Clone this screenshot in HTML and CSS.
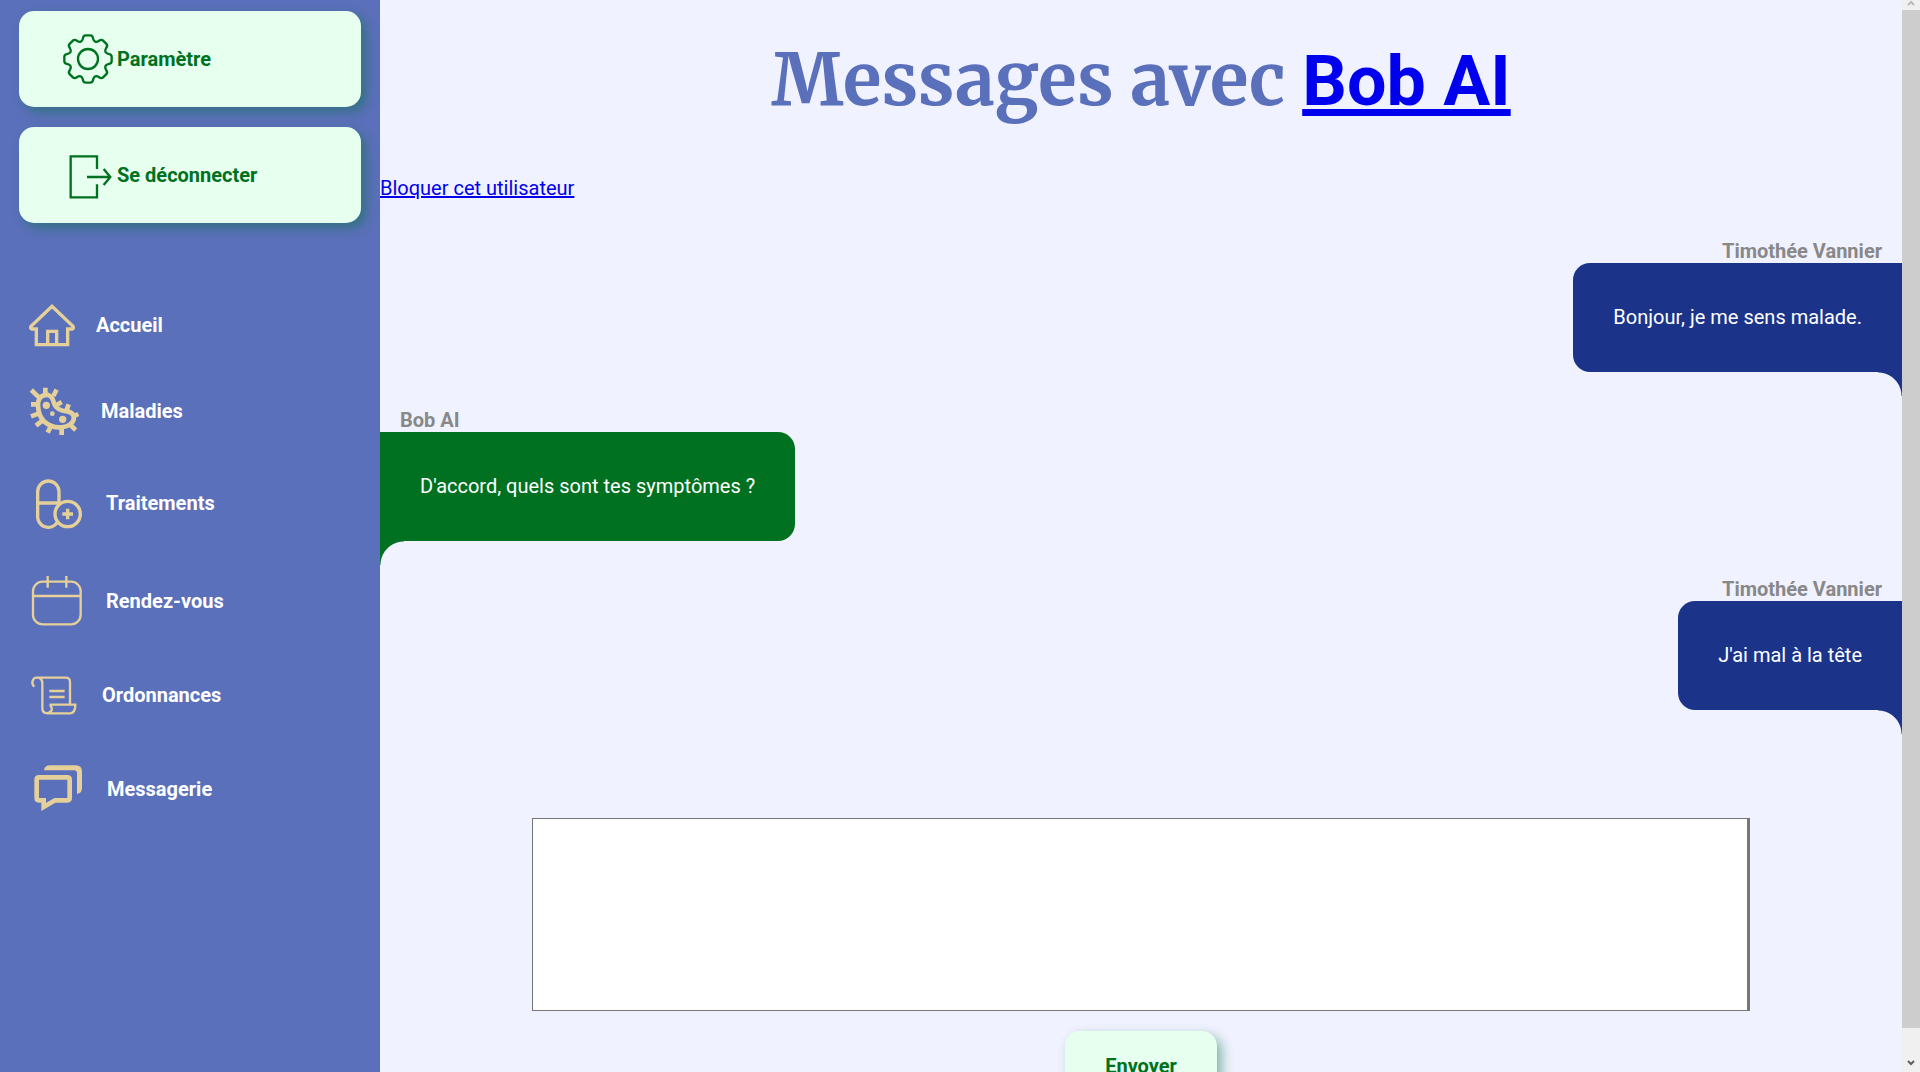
FILE: index.html
```html
<!DOCTYPE html>
<html lang="fr">
<head>
<meta charset="utf-8">
<title>Messages avec Bob AI</title>
<link rel="stylesheet" href="styles.css">
</head>
<body>
<div class="app">
  <aside class="sidebar">
    <div class="account">
      <button class="btn btn-account" type="button">
        <svg viewBox="177 90 174 174" width="58" height="58" aria-hidden="true">
          <g transform="translate(264 177)">
            <circle r="30"/>
            <path id="tooth" d="M-22-52Q-17-54-15.500-61Q-14-71-7-71H7Q14-71 15.500-61Q17-54 22-52"/>
            <use href="#tooth" transform="rotate(45)"/>
            <use href="#tooth" transform="rotate(90)"/>
            <use href="#tooth" transform="rotate(135)"/>
            <use href="#tooth" transform="rotate(180)"/>
            <use href="#tooth" transform="rotate(225)"/>
            <use href="#tooth" transform="rotate(270)"/>
            <use href="#tooth" transform="rotate(315)"/>
          </g>
        </svg>
        Paramètre
      </button>
      <button class="btn btn-account" type="button">
        <svg viewBox="177 438 174 174" width="58" height="58" aria-hidden="true">
          <path d="M291 507V469H212V592H291V553M261 531H330M311 507L331 531L311 555"/>
        </svg>
        Se déconnecter
      </button>
    </div>
    <nav class="menu">
      <a href="#accueil">
        <svg viewBox="60 15 168 240" width="56" height="80" aria-hidden="true">
          <path class="medium" d="M109 147H95Q90 145 93 139L156 79L219 139Q222 145 217 147H203V194H109ZM143 194V154H170V194"/>
        </svg>
        Accueil
      </a>
      <a href="#maladies">
        <svg viewBox="60 255 183 276" width="61" height="92" aria-hidden="true">
          <path class="bold" d="M114 372C114 343 152 333 160 363C166 389 184 393 202 394C226 398 226 420 212 432C184 454 114 444 114 372Z"/>
          <path class="bold" d="M94 330L117 352M136 323V345M170 329L160 348M185 366L170 375M206 373L200 390M235 402L216 411M227 450L210 434M185 465V445M143 458L152 440M108 437L127 422M93 409L115 401M93 373H112"/>
          <g class="solid"><circle cx="139" cy="376" r="11"/><circle cx="157" cy="401" r="7"/><circle cx="188" cy="418" r="11"/></g>
        </svg>
        Maladies
      </a>
      <a href="#traitements">
        <svg viewBox="60 531 198 276" width="66" height="92" aria-hidden="true">
          <path class="medium" d="M172 727A32 32 0 0 1 113 707V635A32 32 0 0 1 177 635V670M113 669H177"/>
          <circle class="medium" cx="203" cy="702" r="38"/>
          <path class="medium" d="M203 686V718M187 702H219"/>
        </svg>
        Traitements
      </a>
      <a href="#rendez-vous">
        <svg viewBox="60 -3 198 312" width="66" height="104" aria-hidden="true">
          <rect x="99" y="95" width="143" height="128" rx="29"/>
          <path d="M99 138H242M143 78V113M199 78V113"/>
        </svg>
        Rendez-vous
      </a>
      <a href="#ordonnances">
        <svg viewBox="60 309 186 252" width="62" height="84" aria-hidden="true">
          <path d="M103 410C91 399 99 383 110 383H197Q210 383 210 396V463M111 383Q127 383 127 401V475Q127 490 142 490H211Q226 488 226 464H152V468Q163 482 142 490M148 423H194M148 441H194"/>
        </svg>
        Ordonnances
      </a>
      <a href="#messagerie">
        <svg viewBox="60 561 201 312" width="67" height="104" aria-hidden="true">
          <path class="bold" d="M117 682H202Q209 682 209 689V744Q209 751 202 751H165L131 771V751H117Q110 751 110 744V689Q110 682 117 682Z"/>
          <path class="solid" d="M132 661Q134 646 150 646H227Q246 646 246 665V715Q246 730 231 732V670Q231 661 222 661Z"/>
        </svg>
        Messagerie
      </a>
    </nav>
  </aside>

  <main class="content">
    <h1>Messages avec <a href="#bob">Bob AI</a></h1>
    <a class="block-user" href="#bloquer">Bloquer cet utilisateur</a>
    <section class="thread">
      <article class="message sent">
        <h2>Timothée Vannier</h2>
        <p>Bonjour, je me sens malade.</p>
      </article>
      <article class="message received">
        <h2>Bob AI</h2>
        <p>D'accord, quels sont tes symptômes ?</p>
      </article>
      <article class="message sent">
        <h2>Timothée Vannier</h2>
        <p>J'ai mal à la tête</p>
      </article>
    </section>
    <form class="composer">
      <textarea aria-label="Votre message"></textarea>
      <button class="btn btn-send" type="button">Envoyer</button>
    </form>
  </main>

  <div class="scrollbar" aria-hidden="true">
    <svg class="arrow-up" viewBox="0 0 8 6" width="8" height="6"><path d="M1 5L4 2L7 5"/></svg>
    <div class="thumb"></div>
    <svg class="arrow-down" viewBox="0 0 8 6" width="8" height="6"><path d="M1 1L4 4L7 1"/></svg>
  </div>
</div>
</body>
</html>
```
FILE: styles.css
```css
* {
  box-sizing: border-box;
}

body {
  margin: 0;
  font: 20px/24px Roboto, "Liberation Sans", sans-serif;
  background: #f0f2ff;
}

.app {
  display: grid;
  grid-template-columns: 380px minmax(0, 1fr) 18px;
  height: 100vh;
  overflow: hidden;
}

/* Sidebar */
.sidebar {
  background: #5b70bb;
  overflow: hidden;
}

.account {
  display: flex;
  flex-direction: column;
  gap: 20px;
  padding: 11px 19px 62px;
}

.btn {
  border: 0;
  border-radius: 15px;
  background: #e6ffee;
  color: #007120;
  font: inherit;
  font-weight: 700;
  box-shadow: 5px 5px 12px rgba(0, 113, 60, 0.45);
}

.btn-account {
  display: flex;
  align-items: center;
  height: 96px;
  padding: 0 40px;
}

svg {
  display: block;
  flex: none;
  fill: none;
  stroke: currentColor;
  stroke-width: 7;
}

.menu {
  display: flex;
  flex-direction: column;
  padding-left: 20px;
}

.menu a {
  display: flex;
  align-items: center;
  gap: 20px;
  color: #fff;
  font-weight: 700;
  text-decoration: none;
}

.menu svg {
  color: #e5d09a;
}

.medium {
  stroke-width: 10;
}

.bold {
  stroke-width: 14;
}

.solid {
  fill: currentColor;
  stroke: none;
}

/* Conversation */
.content {
  overflow: hidden;
}

h1 {
  margin: 32px 0 47px;
  color: #5b70bb;
  font: 700 71px/96px Merriweather, "Noto Serif", "DejaVu Serif Condensed", "DejaVu Serif", serif;
  text-align: center;
}

h1 a {
  font-family: Roboto, "Liberation Sans", sans-serif;
  font-size: 70px;
}

a {
  color: #0000ee;
}

.block-user {
  display: block;
  width: fit-content;
}

.thread {
  display: flex;
  flex-direction: column;
  gap: 36px;
  padding-top: 39px;
}

.message {
  --bubble: #1b348a;
  display: flex;
  flex-direction: column;
  align-items: flex-end;
}

.message h2 {
  margin: 0 20px;
  color: #888;
  font-size: 20px;
  line-height: 24px;
}

.message p {
  position: relative;
  margin: 0;
  padding: 42px 40px 43px;
  border-radius: 17px 0 0 17px;
  background: var(--bubble);
  color: #fff;
}

/* Curved tail under the bubble */
.message p::after {
  content: "";
  position: absolute;
  top: 100%;
  right: 0;
  width: 24px;
  height: 24px;
  background: radial-gradient(circle at 0 100%, transparent 23px, var(--bubble) 24px);
}

.received {
  --bubble: #007120;
  align-items: flex-start;
}

.received p {
  border-radius: 0 17px 17px 0;
}

.received p::after {
  right: auto;
  left: 0;
  background: radial-gradient(circle at 100% 100%, transparent 23px, var(--bubble) 24px);
}

.composer {
  display: flex;
  flex-direction: column;
  align-items: center;
  gap: 20px;
  padding-top: 108px;
}

.composer textarea {
  width: 80%;
  height: 193px;
  border: 1px solid #767676;
  border-right-width: 3px;
  background: #fff;
  font: inherit;
  resize: none;
}

.btn-send {
  height: 70px;
  padding: 0 40px;
}

/* Scroll track */
.scrollbar {
  display: flex;
  flex-direction: column;
  align-items: center;
  background: #f0f0f0;
}

.scrollbar svg {
  stroke: #606060;
  stroke-width: 2;
}

.scrollbar .arrow-up {
  margin-bottom: 4px;
  stroke: #bbb;
}

.scrollbar .arrow-down {
  margin: 32px 0 6px;
}

.thumb {
  flex: 1;
  width: 100%;
  background: #cdcdcd;
}
```
